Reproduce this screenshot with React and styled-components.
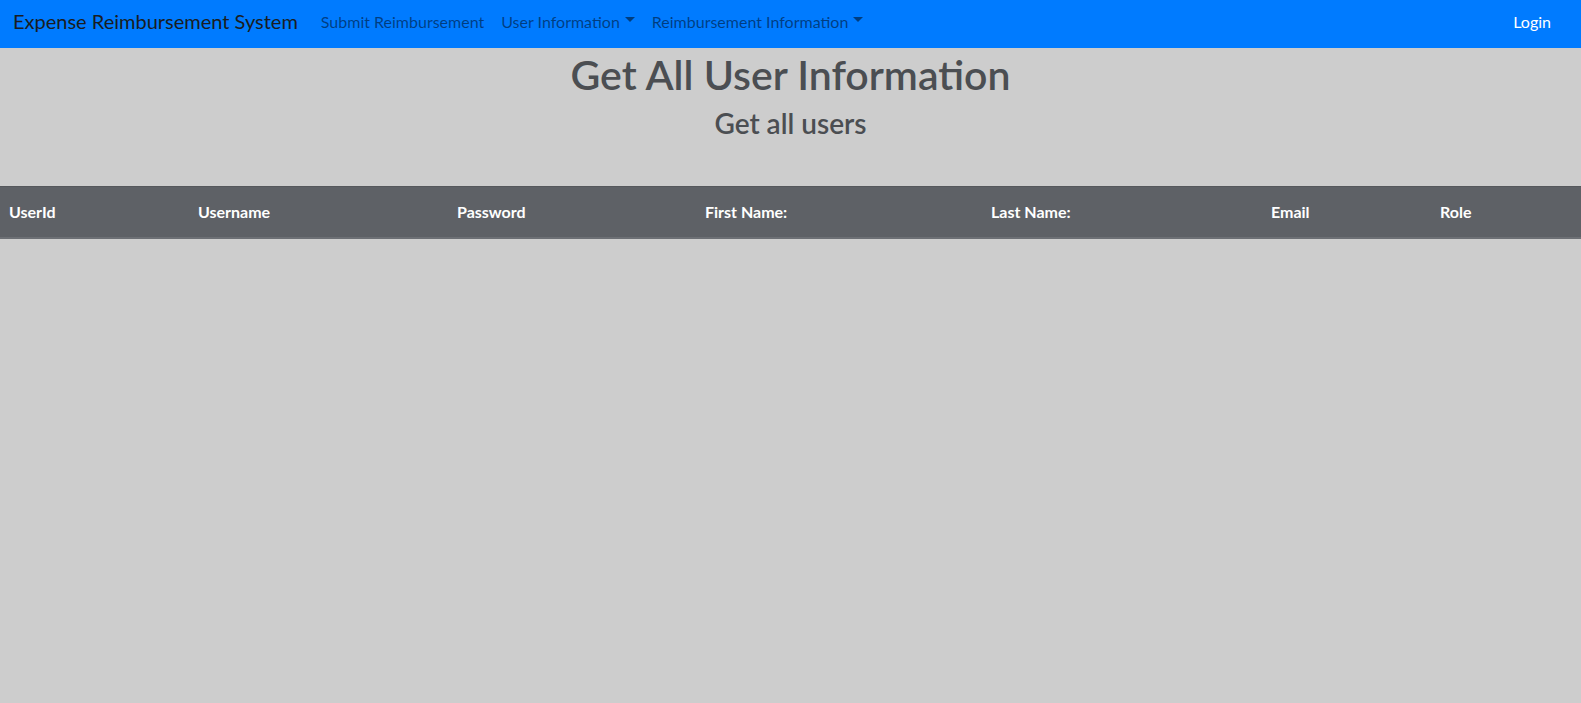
import React from "react";
import styled, { createGlobalStyle } from "styled-components";

const GlobalStyle = createGlobalStyle`
  html, body {
    margin: 0;
    padding: 0;
    background: #cdcdcd;
    font-family: Lato, "Open Sans", "Liberation Sans", sans-serif;
  }
  * {
    box-sizing: border-box;
  }
`;

const Navbar = styled.nav`
  display: flex;
  align-items: center;
  height: 48px;
  padding: 0 14px 6px 13px;
  background: #007bff;
`;

const Brand = styled.a`
  font-size: 20px;
  color: #1a1d21;
  margin-right: 23px;
  white-space: nowrap;
`;

const NavList = styled.div`
  display: flex;
  align-items: center;
  gap: 17px;
  flex: 1;
`;

const NavLink = styled.a`
  font-size: 16px;
  color: ${(p) => (p.light ? "#ffffff" : "rgba(0, 0, 0, 0.5)")};
  white-space: nowrap;
  display: flex;
  align-items: center;
  margin-right: ${(p) => (p.end ? "16px" : "0")};
`;

const Caret = styled.span`
  display: inline-block;
  margin-left: 5px;
  border-top: 5px solid rgba(0, 0, 0, 0.5);
  border-left: 5px solid transparent;
  border-right: 5px solid transparent;
  transform: translateY(-2px);
`;

const Header = styled.header`
  text-align: center;
  color: #4b4e52;
  padding-top: 3px;
`;

const Title = styled.h1`
  margin: 0;
  font-size: 41px;
  line-height: 48px;
  font-weight: 600;
`;

const Subtitle = styled.h3`
  margin: 7px 0 0;
  font-size: 28px;
  line-height: 34px;
  font-weight: 600;
`;

const Table = styled.table`
  width: 100%;
  margin-top: 46px;
  border-collapse: collapse;
  table-layout: fixed;
`;

const HeadRow = styled.tr`
  background: #5e6166;
`;

const HeadCell = styled.th`
  width: ${(p) => p.w}px;
  padding: 15px 9px 16px;
  text-align: left;
  font-size: 16px;
  font-weight: 700;
  color: #ffffff;
  border-top: 1px solid #55585c;
  border-bottom: 2px solid #6d7075;
`;

const columns = [
  ["UserId", 189],
  ["Username", 259],
  ["Password", 248],
  ["First Name:", 286],
  ["Last Name:", 280],
  ["Email", 169],
  ["Role", 150],
];

export default function App() {
  return (
    <>
      <GlobalStyle />
      <Navbar>
        <Brand>Expense Reimbursement System</Brand>
        <NavList>
          <NavLink>Submit Reimbursement</NavLink>
          <NavLink>
            User Information
            <Caret />
          </NavLink>
          <NavLink>
            Reimbursement Information
            <Caret />
          </NavLink>
        </NavList>
        <NavLink light end>
          Login
        </NavLink>
      </Navbar>
      <Header>
        <Title>Get All User Information</Title>
        <Subtitle>Get all users</Subtitle>
      </Header>
      <Table>
        <thead>
          <HeadRow>
            {columns.map(([label, w]) => (
              <HeadCell key={label} w={w}>
                {label}
              </HeadCell>
            ))}
          </HeadRow>
        </thead>
      </Table>
    </>
  );
}
